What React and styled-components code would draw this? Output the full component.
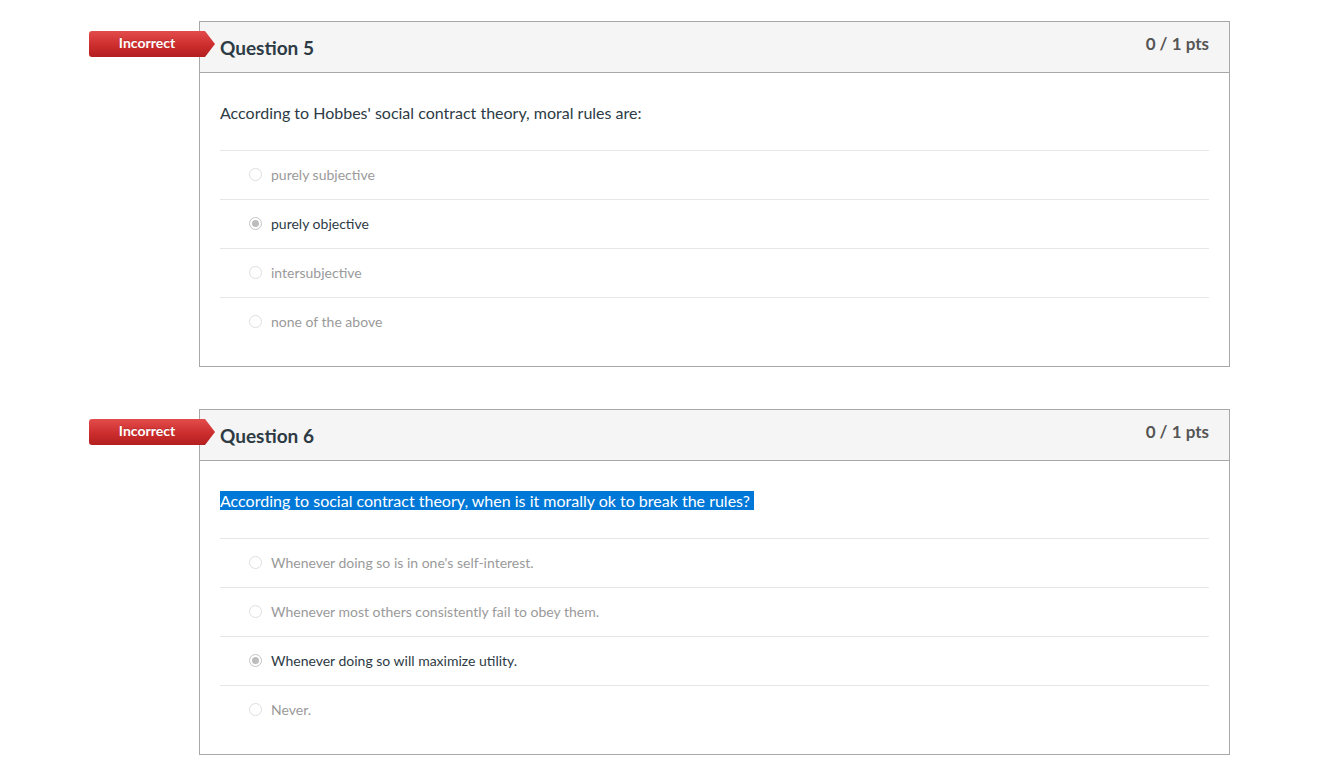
import styled, { createGlobalStyle } from "styled-components";

const GlobalStyle = createGlobalStyle`
  body {
    margin: 0;
    background: #fff;
    font-family: Lato, "Open Sans", sans-serif;
    color: #2d3b45;
  }
`

const Page = styled.div`
  display: flex;
  flex-direction: column;
  gap: 42px;
  padding: 21px 0 0 199px;
  width: 1031px;
`

const QuestionCard = styled.div`
  position: relative;
  border: 1px solid #a8a8a8;
  background: #fff;
`

const Badge = styled.div`
  position: absolute;
  left: -111px;
  top: 9px;
  width: 116px;
  height: 24px;
  padding: 0 10px 2px 0;
  box-sizing: content-box;
  display: flex;
  align-items: center;
  justify-content: center;
  color: #fff;
  font-weight: bold;
  font-size: 14px;
  line-height: 1;
  border-radius: 3px 0 0 3px;
  background: linear-gradient(to bottom, #e34c4c 0%, #cc2d2d 55%, #b31f1f 100%);
  clip-path: polygon(0 0, calc(100% - 10px) 0, 100% 50%, calc(100% - 10px) 100%, 0 100%);
  text-shadow: 0 -1px 0 rgba(0, 0, 0, 0.15);
`

const Header = styled.div`
  display: flex;
  justify-content: space-between;
  align-items: flex-start;
  height: 51px;
  box-sizing: border-box;
  padding: 11px 20px 0 20px;
  background: #f5f5f5;
  border-bottom: 1px solid #a8a8a8;
`

const Title = styled.h2`
  margin: 0;
  font-size: 19px;
  line-height: 30px;
  font-weight: bold;
  color: #2d3b45;
`

const Points = styled.div`
  margin-top: 1px;
  font-size: 17px;
  line-height: 20px;
  font-weight: bold;
  color: #555;
`

const Body = styled.div`
  padding: 28px 20px 20px 20px;
`

const QuestionText = styled.div`
  font-size: 16px;
  line-height: 24px;
  margin-bottom: 25px;
`

const Highlight = styled.span`
  background: #0078d7;
  color: #fff;
`

const AnswerRow = styled.div`
  display: flex;
  align-items: center;
  gap: 9px;
  height: 46px;
  padding: 0 0 2px 29px;
  border-top: 1px solid #e6e6e6;
  font-size: 14px;
  color: ${props => props.selected ? "#2d3b45" : "#9a9a9a"};
`

const Radio = styled.span`
  width: 13px;
  height: 13px;
  box-sizing: border-box;
  border-radius: 50%;
  border: 1px solid ${props => props.checked ? "#c4c4c4" : "#dedede"};
  background: #fff;
  display: flex;
  align-items: center;
  justify-content: center;

  &::after {
    content: "";
    display: ${props => props.checked ? "block" : "none"};
    width: 7px;
    height: 7px;
    border-radius: 50%;
    background: #bdbdbd;
  }
`

const questions = [
  {
    number: 5,
    text: "According to Hobbes' social contract theory, moral rules are:",
    answers: ["purely subjective", "purely objective", "intersubjective", "none of the above"],
    chosen: 1
  },
  {
    number: 6,
    text: "According to social contract theory, when is it morally ok to break the rules?",
    highlighted: true,
    answers: [
      "Whenever doing so is in one's self-interest.",
      "Whenever most others consistently fail to obey them.",
      "Whenever doing so will maximize utility.",
      "Never."
    ],
    chosen: 2
  }
]

function Question ({ number, text, highlighted, answers, chosen }) {
  return (
    <QuestionCard>
      <Badge>Incorrect</Badge>
      <Header>
        <Title>Question {number}</Title>
        <Points>0 / 1 pts</Points>
      </Header>
      <Body>
        <QuestionText>
          {highlighted ? <Highlight>{text}&nbsp;</Highlight> : text}
        </QuestionText>
        {answers.map((a, i) => (
          <AnswerRow key={a} selected={i === chosen}>
            <Radio checked={i === chosen} />
            {a}
          </AnswerRow>
        ))}
      </Body>
    </QuestionCard>
  )
}

function App () {
  return (
    <>
      <GlobalStyle />
      <Page>
        {questions.map(q => <Question key={q.number} {...q} />)}
      </Page>
    </>
  )
}

export default App
